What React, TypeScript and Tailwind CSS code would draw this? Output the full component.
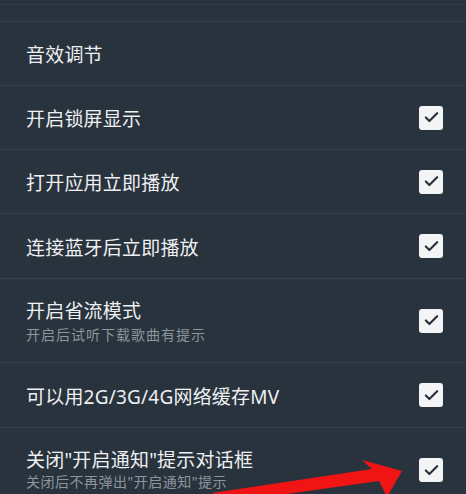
import { Check } from "lucide-react";

type Row = {
  title: string;
  sub?: string;
  checked?: boolean;
  h: string;
};

const rows: Row[] = [
  { title: "音效调节", h: "h-[64px]" },
  { title: "开启锁屏显示", checked: true, h: "h-[64px]" },
  { title: "打开应用立即播放", checked: true, h: "h-[64px]" },
  { title: "连接蓝牙后立即播放", checked: true, h: "h-[65px]" },
  { title: "开启省流模式", sub: "开启后试听下载歌曲有提示", checked: true, h: "h-[84px]" },
  { title: "可以用2G/3G/4G网络缓存MV", checked: true, h: "h-[65px]" },
];

function Box() {
  return (
    <div className="flex h-[24px] w-[24px] items-center justify-center rounded-[3px] bg-[#f3f4f5]">
      <Check className="h-[17px] w-[17px] text-[#26303a]" strokeWidth={3} />
    </div>
  );
}

function SettingRow({ row }: { row: Row }) {
  return (
    <div className={`flex items-center border-b border-[#36414c] pl-[26px] pr-[23px] ${row.h}`}>
      <div className={`flex min-w-0 flex-1 flex-col ${row.sub ? "" : "pt-[3px]"}`}>
        <span className="text-[19px] leading-[24px] tracking-[0.2px] text-[#eef0f2]">{row.title}</span>
        {row.sub && (
          <span className="mt-[3px] text-[14px] leading-[17px] tracking-[1px] text-[#8d959d]">
            {row.sub}
          </span>
        )}
      </div>
      {row.checked && <Box />}
    </div>
  );
}

export default function App() {
  return (
    <div
      className="relative h-[494px] w-[466px] overflow-hidden bg-[#29333e]"
      style={{ fontFamily: "'Noto Sans', 'Noto Sans CJK SC', sans-serif" }}
    >
      <div className="h-[5px] border-b border-[#323c47]" />
      <div className="h-[17px] border-b border-[#36414c]" />
      {rows.map((r) => (
        <SettingRow key={r.title} row={r} />
      ))}
      <div className="flex h-[70px] items-start pl-[26px] pr-[23px] pt-[20px]">
        <div className="flex min-w-0 flex-1 flex-col">
          <span className="text-[19px] leading-[24px] tracking-[0.2px] text-[#eef0f2]">关闭"开启通知"提示对话框</span>
          <span className="mt-[1px] text-[14px] leading-[17px] tracking-[0.5px] text-[#8d959d]">
            关闭后不再弹出"开启通知"提示
          </span>
        </div>
        <div className="mt-[10px]">
          <Box />
        </div>
      </div>

      {/* red annotation arrow */}
      <svg className="absolute left-0 top-0" width="466" height="494" viewBox="0 0 466 494">
        <polygon
          points="212,493 372,469 362,460 402,471 387,497 379,481 230,502"
          fill="#f01414"
        />
      </svg>
    </div>
  );
}
